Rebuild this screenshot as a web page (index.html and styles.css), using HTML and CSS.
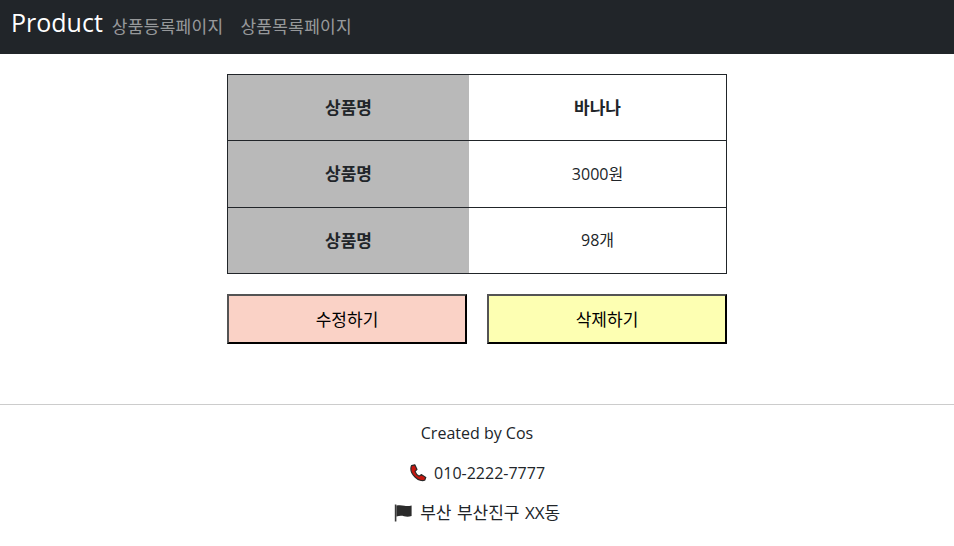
FILE: index.html
```html
<!DOCTYPE html>
<html lang="ko">
<head>
  <meta charset="UTF-8" />
  <meta name="viewport" content="width=device-width, initial-scale=1.0"/>
  <title>Product</title>
  <link rel="stylesheet" href="styles.css">
</head>
<body>

  <nav class="navbar">
    <a class="brand" href="#">Product</a>
    <a class="nav-link" href="#">상품등록페이지</a>
    <a class="nav-link" href="#">상품목록페이지</a>
  </nav>

  <div class="container">
    <table class="detail">
      <tr>
        <th>상품명</th>
        <td class="name">바나나</td>
      </tr>
      <tr>
        <th>상품명</th>
        <td>3000원</td>
      </tr>
      <tr>
        <th>상품명</th>
        <td>98개</td>
      </tr>
    </table>

    <div class="buttons">
      <button class="btn-edit">수정하기</button>
      <button class="btn-delete">삭제하기</button>
    </div>
  </div>

  <hr class="divider">

  <footer class="footer">
    <p>Created by Cos</p>
    <p>
      <svg class="icon" width="18" height="18" viewBox="0 0 18 18">
        <path d="M2.6 1.6 L5.8 0.8 L8 5.4 L6 7.4 C6.6 9.4 8.2 11.2 10.2 12.2 L12.2 10.6 L16.8 13.4 L15.8 16 C13.6 17.6 9.2 16.2 6 13 C2.8 9.8 0.8 5.6 2.6 1.6 Z" fill="#c8160f" stroke="#2a2a2a" stroke-width="1.2" stroke-linejoin="round"/>
      </svg>
      010-2222-7777
    </p>
    <p class="address">
      <svg class="icon" width="18" height="18" viewBox="0 0 18 18">
        <path d="M0.8 0.5 H2.4 V17.5 H0.8 Z" fill="#3a3a3a"/>
        <path d="M2.4 1.6 C6 0.8 8 1.4 10.4 1.8 C12.8 2.2 15.4 2 17.6 1.4 V12 C15 12.8 12.5 12.8 10 12.2 C8 11.8 5.6 11.6 2.4 12.6 Z" fill="#2b2b2b"/>
      </svg>
      부산 부산진구 XX동
    </p>
  </footer>

</body>
</html>
```

FILE: styles.css
```css
body {
  margin: 0;
  font-family: "Open Sans", "Noto Sans CJK KR", sans-serif;
  font-size: 16px;
  color: #212529;
  background: #fff;
}

a {
  text-decoration: none;
}

.navbar {
  display: flex;
  align-items: center;
  height: 54px;
  box-sizing: border-box;
  padding: 0 11px 4px;
  background: #212529;
}

.brand {
  font-size: 25px;
  color: #fff;
  margin-right: 9px;
  margin-bottom: 6px;
}

.nav-link {
  font-size: 17px;
  letter-spacing: 0.3px;
  color: rgba(255, 255, 255, 0.55);
  margin-right: 17px;
}

.container {
  width: 500px;
  margin: 20px auto 0;
}

.detail {
  width: 100%;
  height: 200px;
  border-collapse: collapse;
  border: 1px solid #212529;
  table-layout: fixed;
}

.detail tr {
  border-bottom: 1px solid #212529;
}

.detail th,
.detail td {
  padding: 0 0 2px;
}

.detail th {
  width: 241px;
  font-size: 17px;
  background: #b9b9b9;
}

.detail td {
  text-align: center;
}

.detail .name {
  font-size: 17px;
  font-weight: bold;
}

.buttons {
  display: flex;
  justify-content: space-between;
  margin-top: 20px;
}

.buttons button {
  width: 240px;
  height: 50px;
  padding: 0 0 2px;
  font-family: inherit;
  font-size: 17px;
  color: #000;
  border: 2px outset #000;
  cursor: pointer;
}

.btn-edit {
  background: #fad2c6;
}

.btn-delete {
  background: #fdffb2;
}

.divider {
  margin: 60px 0 0;
  border: 0;
  border-top: 1px solid #ccc;
}

.footer {
  text-align: center;
  padding-top: 16px;
}

.footer p {
  margin: 0 0 16px;
  line-height: 24px;
}

.footer .address {
  font-size: 17px;
  word-spacing: 1px;
}

.icon {
  vertical-align: -3px;
  margin-right: 3px;
}
```
